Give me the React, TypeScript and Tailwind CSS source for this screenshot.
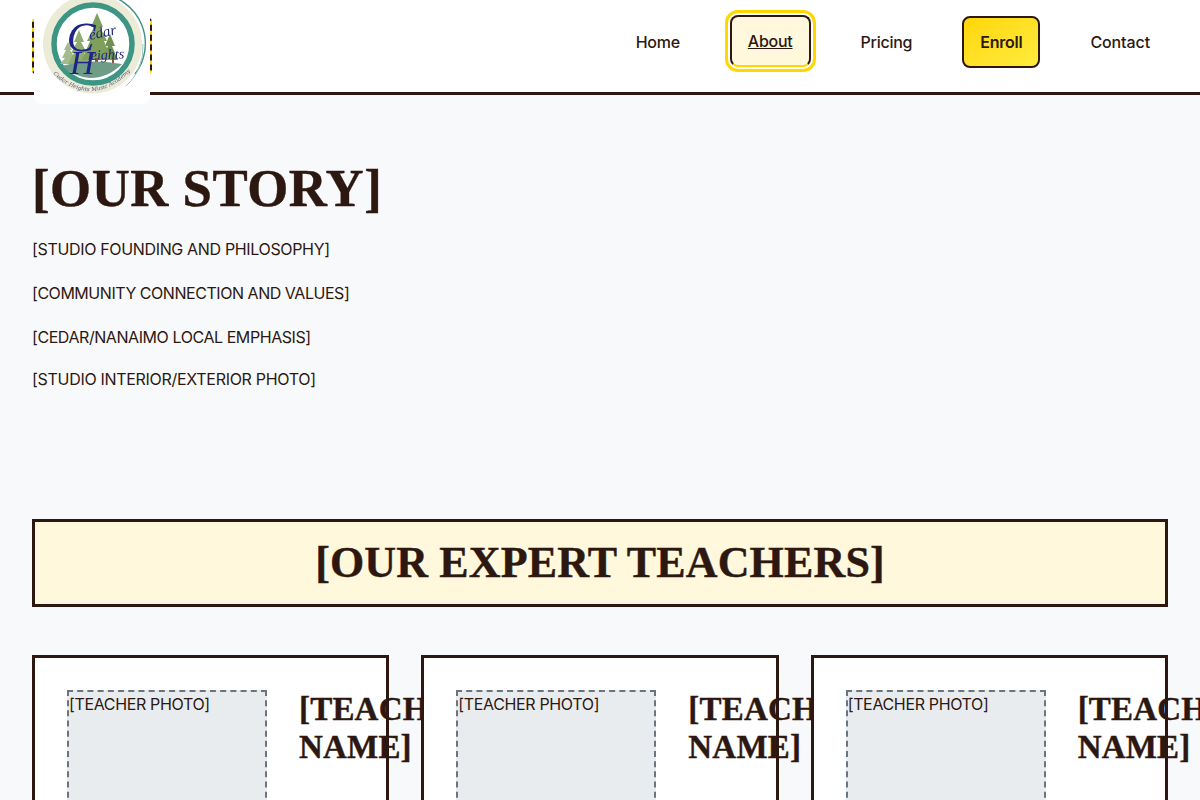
const serif = "font-['Liberation_Serif',serif] font-bold [-webkit-text-stroke:0.4px_#2c1810]";

// drawn in page coordinates so it lines up with the header
function Logo() {
  return (
    <svg viewBox="34 0 116 104" className="h-[104px] w-[116px] blur-[0.5px]">
      <circle cx="92.5" cy="44" r="49.5" fill="#ecebd8" />
      <path d="M102 -6 A 50 50 0 0 1 135 74" fill="none" stroke="#3f9183" strokeWidth="1.4" />
      <path d="M143 44 A 52 52 0 0 1 126 86" fill="none" stroke="#9cc7bd" strokeWidth="1" />
      <circle cx="93" cy="44" r="37" fill="#ffffff" />
      <circle cx="93" cy="44" r="39" fill="none" stroke="#3d9584" strokeWidth="5.5" />
      <path d="M68 42 L72 50 L70 50 L75 58 L72 58 L77 64 L60 64 L65 58 L62 58 L66 50 L64 50 Z" fill="#a3bb8c" />
      <path d="M79 30 L84 42 L81 42 L87 53 L84 53 L90 64 L68 64 L74 53 L71 53 L77 42 L74 42 Z" fill="#8fac72" />
      <path d="M110 34 L115 46 L112 46 L118 60 L102 60 L108 46 L105 46 Z" fill="#6d9150" />
      <path d="M97 13 L103 27 L100 27 L107 41 L104 41 L112 60 L82 60 L90 41 L87 41 L94 27 L91 27 Z" fill="#7fa05c" />
      <rect x="95" y="58" width="3" height="9" fill="#8a4f34" />
      <rect x="112" y="58" width="2" height="6" fill="#8a4f34" />
      <path d="M62 66 Q 90 58 122 64 Q 108 78 90 78 Q 72 76 62 66 Z" fill="#6f9c86" />
      <text x="66" y="50" fontFamily="'Liberation Serif',serif" fontStyle="italic" fontSize="42" fill="#1c2583" transform="rotate(4 66 50)">C</text>
      <text x="90" y="40" fontFamily="'Liberation Serif',serif" fontStyle="italic" fontSize="15" fill="#1c2583" transform="rotate(-12 90 40)">edar</text>
      <text x="70" y="74" fontFamily="'Liberation Serif',serif" fontStyle="italic" fontSize="34" fill="#1c2583">H</text>
      <text x="91" y="60" fontFamily="'Liberation Serif',serif" fontStyle="italic" fontSize="14" fill="#1c2583" transform="rotate(-3 91 60)">eights</text>
      <path id="logo-arc" d="M53 74 Q 92 110 132 70" fill="none" />
      <text fontFamily="'DejaVu Serif',serif" fontStyle="italic" fontSize="5.6" fill="#55557a">
        <textPath href="#logo-arc">Cedar Heights Music Academy</textPath>
      </text>
    </svg>
  );
}

function NavItem({ label, tight = true }: { label: string; tight?: boolean }) {
  return (
    <a className={`rounded-lg border-2 border-transparent px-4 py-3 text-base font-[450] leading-6 ${tight ? "tracking-[-0.25px]" : "tracking-[-0.1px]"}`}>
      {label}
    </a>
  );
}

function TeacherCard() {
  return (
    <div className="flex h-[300px] min-w-0 gap-8 border-[3px] border-[#2c1810] bg-white p-8">
      <div className="h-[250px] w-[200px] shrink-0 border-2 border-dashed border-[#6c757d] bg-[#e9ecef] text-base leading-6 tracking-[-0.35px]">
        [TEACHER PHOTO]
      </div>
      <h3 className={`${serif} text-[33px] leading-[38px] tracking-[0.2px]`}>[TEACHER NAME]</h3>
    </div>
  );
}

export default function App() {
  return (
    <div className="h-[800px] overflow-hidden bg-[#f8f9fa] font-['Inter',sans-serif] text-[#2c1810]">
      <header className="flex h-[95px] items-start justify-between border-b-[3px] border-[#2c1810] bg-white px-8 pt-4">
        <div className="relative mt-[2px] h-[56px] w-[120px] rounded border-2 border-dashed border-[#2c1810] bg-[#ffd700]">
          <div className="absolute left-0 top-[-20px] h-[104px] w-[116px] overflow-hidden rounded-b-lg bg-white">
            <Logo />
          </div>
        </div>
        <nav className="flex items-center gap-8">
          <NavItem label="Home" />
          <a className="-translate-y-px rounded-lg border-2 border-[#2c1810] border-b-[#ffd700] bg-[#fff8dc] px-4 py-3 text-base font-[450] leading-6 tracking-[-0.25px] underline outline-[3px] outline-offset-[2px] outline-[#ffd700]">
            About
          </a>
          <NavItem label="Pricing" />
          <a className="rounded-lg border-2 border-[#2c1810] bg-gradient-to-br from-[#ffd700] to-[#ffeb3b] px-4 py-3 text-base font-semibold leading-6 tracking-[-0.25px]">
            Enroll
          </a>
          <NavItem label="Contact" tight={false} />
        </nav>
      </header>

      <main className="px-8 pt-16">
        <h1 className={`${serif} text-[52.8px] leading-[58px] tracking-[0.5px]`}>[OUR STORY]</h1>
        <p className="mt-5 text-base leading-6 tracking-[-0.34px]">[STUDIO FOUNDING AND PHILOSOPHY]</p>
        <p className="mt-5 text-base leading-6 tracking-[-0.46px]">[COMMUNITY CONNECTION AND VALUES]</p>
        <p className="mt-5 text-base leading-6 tracking-[-0.43px]">[CEDAR/NANAIMO LOCAL EMPHASIS]</p>
        <p className="mt-[18px] text-base leading-6 tracking-[-0.3px]">[STUDIO INTERIOR/EXTERIOR PHOTO]</p>

        <div className="mt-[128px] border-[3px] border-[#2c1810] bg-[#fff8dc] py-4 text-center">
          <h2 className={`${serif} text-[44px] leading-[50px] tracking-[0.15px]`}>[OUR EXPERT TEACHERS]</h2>
        </div>

        <div className="mt-12 grid grid-cols-3 gap-8">
          <TeacherCard />
          <TeacherCard />
          <TeacherCard />
        </div>
      </main>
    </div>
  );
}
